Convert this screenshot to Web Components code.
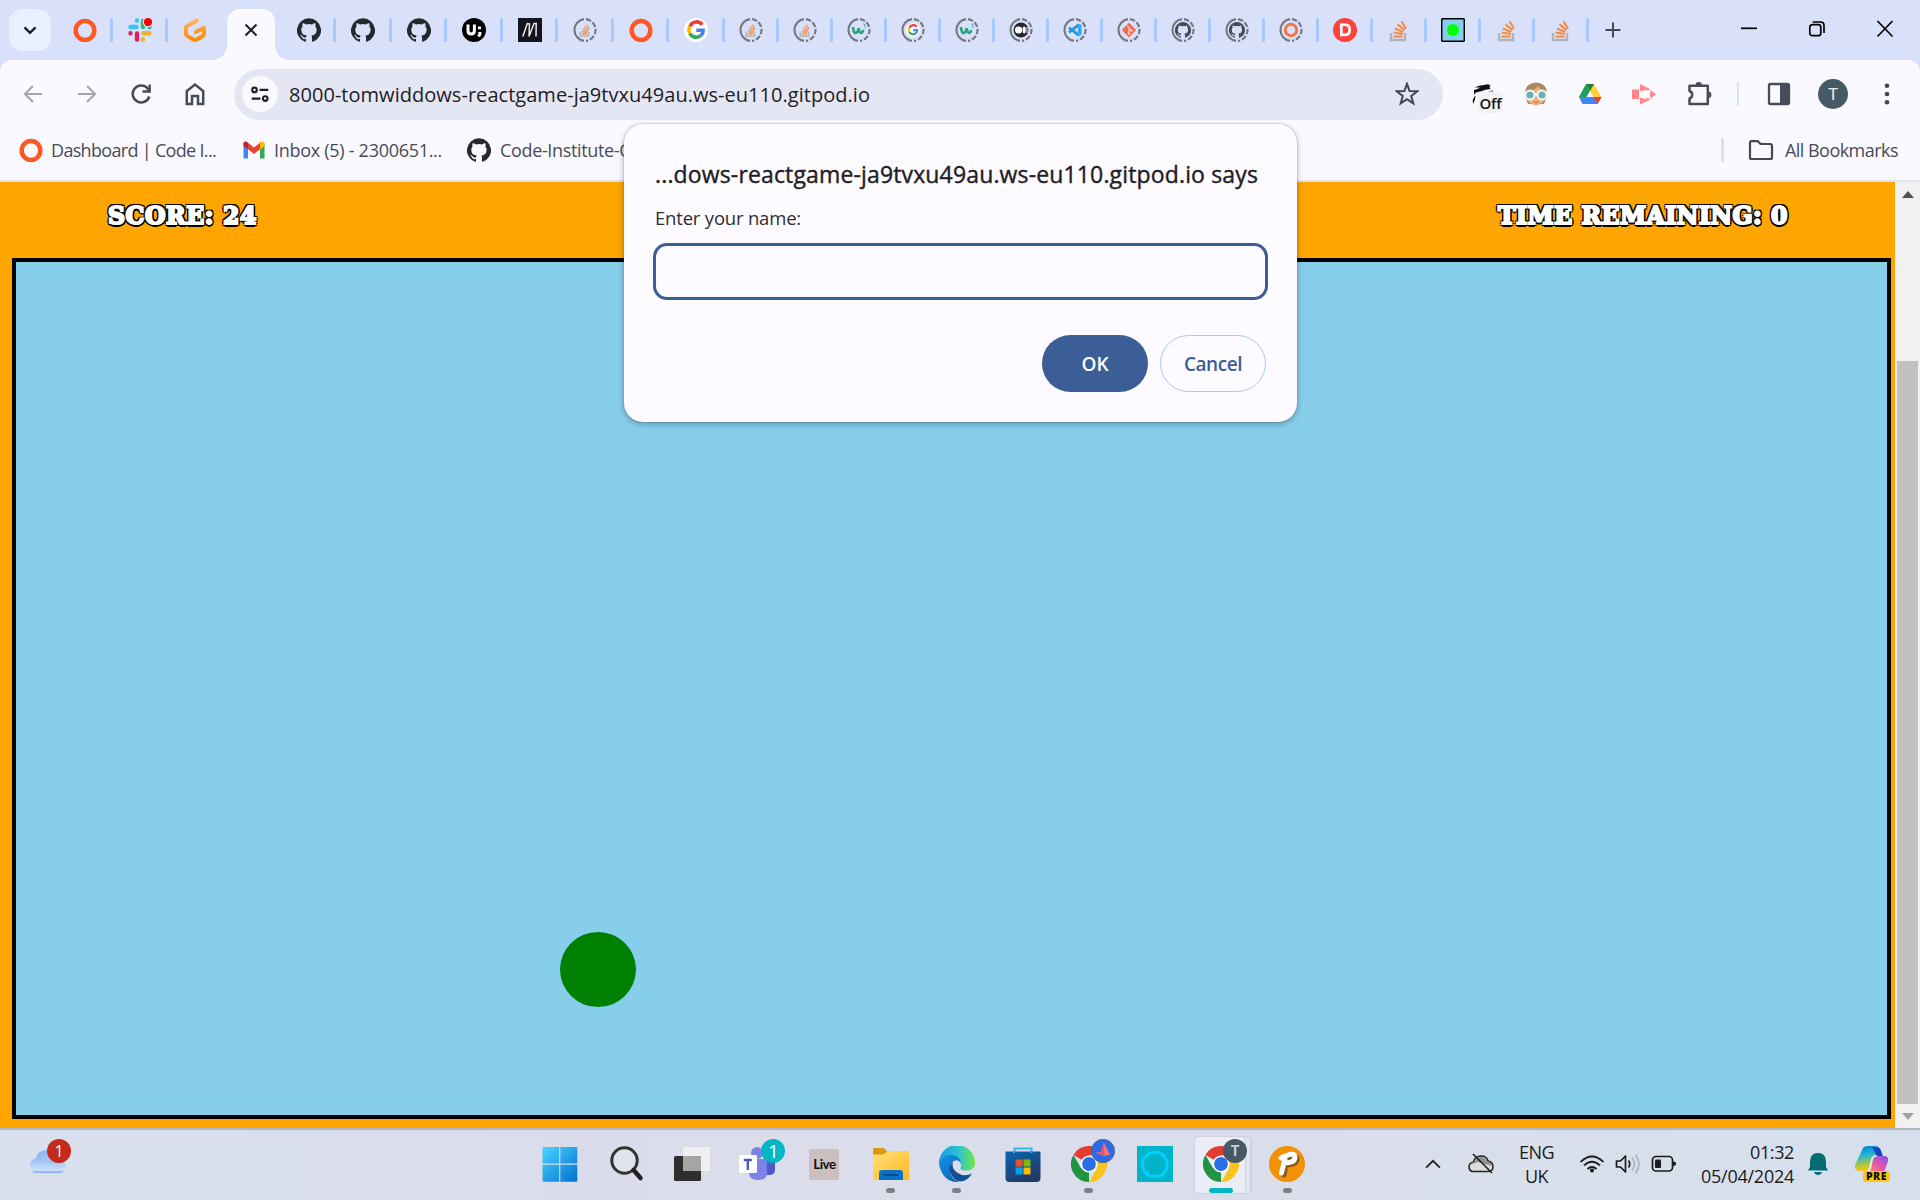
<!DOCTYPE html>
<html lang="en">
<head>
<meta charset="utf-8">
<title>React game</title>
<style>
html,body{margin:0;width:1920px;height:1200px;overflow:hidden;font-family:"Open Sans","Noto Sans",sans-serif}
</style>
</head>
<body>
<desk-top></desk-top>
<script>
const ring = inner => `<g fill="none" stroke="#737780" stroke-width="2.1"><path d="M11 1.100A11 11 0 0 0 11 22.900"/><path d="M13 1.100A11 11 0 0 1 13 22.900" stroke-dasharray="5.400 1.900"/></g><g transform="translate(4.8 4.8) scale(.6)">${inner}</g>`;
const octo = c => `<path fill="${c}" d="M12 .3a12 12 0 0 0-3.8 23.4c.6.1.8-.3.8-.6v-2c-3.300.7-4-1.600-4-1.600-.6-1.400-1.400-1.800-1.400-1.800-1-.7.1-.7.1-.7 1.200.1 1.900 1.200 1.900 1.200 1 1.800 2.800 1.300 3.500 1 0-.8.4-1.300.7-1.600-2.700-.3-5.500-1.300-5.500-6 0-1.200.5-2.300 1.300-3.100-.2-.4-.6-1.600 0-3.200 0 0 1-.3 3.400 1.200a11.500 11.500 0 0 1 6 0c2.300-1.500 3.300-1.200 3.300-1.200.6 1.600.2 2.800 0 3.200.9.8 1.300 1.900 1.300 3.200 0 4.600-2.800 5.600-5.500 5.900.5.4.9 1 .9 2.200v3.300c0 .3.1.7.8.6A12 12 0 0 0 12 .3"/>`;
const orangeO = `<ellipse cx="12" cy="12.500" rx="9.300" ry="9.600" fill="none" stroke="#ff5722" stroke-width="4.500"/>`;
const stack = `<path d="M4 15v7h14v-7" fill="none" stroke="#b0b4bd" stroke-width="2.400"/><path d="M6.500 18.500h9M6.600 14.600l9 1.500M8 10.500l8.300 3.700M10.500 6.400l7 5.700M14.500 3.200l4.500 7.500" stroke="#f48a3c" stroke-width="2"/>`;
const google = `<g fill="none" stroke-width="3.600"><path d="M18.300 6.800A7 7 0 0 0 6 8.500" stroke="#ea4335"/><path d="M5.900 8.500a7 7 0 0 0 0 7" stroke="#fbbc05"/><path d="M5.900 15.500a7 7 0 0 0 10.800 2" stroke="#34a853"/><path d="M16.700 17.500c1.600-1.300 2.500-3 2.400-5.200H12.300" stroke="#4285f4"/></g>`;
const chrome = `<path d="M18 18 2.400 9A18 18 0 0 1 33.600 9Z" fill="#e33b2e"/><path d="M18 18V36A18 18 0 0 1 2.400 9L10.200 22.500Z" fill="#229342"/><path d="M33.600 9A18 18 0 0 1 18 36L25.800 22.500 18 9Z" fill="#fcc31e"/><circle cx="18" cy="18" r="8.600" fill="#fff"/><circle cx="18" cy="18" r="6.900" fill="#2b6fe8"/>`;
const line = (d, c = '#474b57', w = 2.2) => `<path d="${d}" fill="none" stroke="${c}" stroke-width="${w}"/>`;
const ICONS = {
  o: [24,24,orangeO],
  slack: [24,24,`<g stroke-width="4.400" stroke-linecap="round"><path d="M2.500 9h6M9 2.500v.1" stroke="#36c5f0"/><path d="M15 3v6" stroke="#2eb67d"/><path d="M21.500 9v.1" stroke="#2eb67d"/><path d="M15.500 15.300h6M15 21.500v.1" stroke="#ecb22e"/><path d="M9 15.500v6M2.500 15.300v.1" stroke="#e01e5a"/></g><circle cx="20" cy="4" r="4.700" fill="#f00" stroke="#d9e1fa" stroke-width="1.200"/>`],
  gitpod: [24,24,`<defs><linearGradient id="g" x2="0" y2="1"><stop stop-color="#ffb45b"/><stop offset="1" stop-color="#ff8a00"/></linearGradient></defs><path d="M13.800 2.400 4.500 7.700Q3 8.500 3 10v5.800Q3 17.300 4.300 18l6.200 3.500q1.500.8 3 0l6.200-3.500q1.300-.7 1.300-2.200V9.500L12.800 14" fill="none" stroke="url(#g)" stroke-width="4" stroke-linecap="round" stroke-linejoin="round"/>`],
  x: [24,24,line('M6.500 6.500 17.500 17.500M17.500 6.500 6.500 17.500','#1f2024',2)],
  gh: [24,24,octo('#24292f')],
  ui: [24,24,`<circle cx="12" cy="12" r="12" fill="#000"/><path d="M6 6.500v6q0 3.500 3.200 3.500t3.200-3.500v-6" fill="none" stroke="#fff" stroke-width="3"/><path d="M17.500 8.500v2.800M17.800 14v2.500l-1.300 2" stroke="#fff" stroke-width="3" fill="none"/>`],
  mm: [24,24,`<path fill="#14141e" d="M0 0h24v24H0z"/><path d="M4.800 18.500 9.300 5.500l2.200.3-.5 12.700 5-13h2.200l-.2 13" stroke="#e8e8e8" stroke-width="1.500" fill="none"/>`],
  rso: [24,24,ring(stack)],
  g: [24,24,`<circle cx="12" cy="12" r="12" fill="#fff"/>${google}`],
  rg: [24,24,ring(`<circle cx="12" cy="12" r="11.500" fill="#fff"/>${google}`)],
  rw: [24,24,ring(`<path d="M2 7q1 11 5 10 3-1 4.500-8 1 8 4 8 2.500 0 3.500-5" fill="none" stroke="#24a87c" stroke-width="4.500"/><path d="M19 2q4-1 2 3 4 1 0 4" fill="none" stroke="#24a87c" stroke-width="1.500"/>`)],
  rmed: [24,24,ring(`<circle cx="12" cy="12" r="12.500" fill="#25262c"/><circle cx="8" cy="12" r="6" fill="#fff"/><ellipse cx="17.300" cy="12" rx="2.700" ry="5.800" fill="#fff"/><path d="M22 7v10" stroke="#fff" stroke-width="1.500"/>`)],
  rvs: [24,24,ring(`<path d="M18 3.500 2 16M18 20.500 2 8" stroke="#2396dc" stroke-width="4.500"/><path d="m17 1 6 2.500v17L17 23z" fill="#36a9ee"/>`)],
  rgit: [24,24,ring(`<path d="M12 0 24 12 12 24 0 12z" fill="#f66850"/><path d="M9 5l3 3v10M12 9l4 4" stroke="#ffe2dc" stroke-width="1.800" fill="none"/><circle cx="12" cy="18" r="2" fill="#ffe2dc"/><circle cx="16" cy="13" r="2" fill="#ffe2dc"/>`)],
  rgh: [24,24,ring(`<g transform="translate(-1.500 -1.500) scale(1.120)">${octo('#454a56')}</g>`)],
  ro: [24,24,ring(`<circle cx="12" cy="12" r="9.500" fill="none" stroke="#f37348" stroke-width="5"/>`)],
  d: [24,24,`<circle cx="12" cy="12" r="12" fill="#ff403d"/><path d="M8.300 6.700h3.200c3.600 0 5.200 2 5.200 5s-1.700 5.200-5.300 5.200H8.300z" fill="none" stroke="#fff" stroke-width="2.700"/>`],
  so: [24,24,stack],
  game: [24,24,`<rect x=".7" y=".7" width="22.600" height="22.600" rx="1" fill="#87ceeb" stroke="#000" stroke-width="1.500"/><circle cx="12" cy="12" r="6" fill="#0f0"/>`],
  plus: [24,24,line('M12 4.500v15M4.500 12h15','#454957',2)],
  chev: [24,24,line('M6.500 9.300 12 14.800 17.500 9.300','#1f2024',2.500)],
  min: [24,24,line('M4 11.300h16','#000',1.700)],
  rest: [24,24,`<rect x="4.800" y="7.700" width="11" height="11" rx="2.500" fill="none" stroke="#000" stroke-width="1.700"/><path d="M7.800 5h7.700q3.500 0 3.500 3.500v7.500" fill="none" stroke="#000" stroke-width="1.700"/>`],
  close: [24,24,line('M4.500 4 19.500 19.500M19.500 4 4.500 19.500','#000',1.700)],
  back: [24,24,line('M21 12H4M12 4 4 12l8 8','#a5a7ae')],
  fwd: [24,24,line('M3 12h17M12 4l8 8-8 8','#a5a7ae')],
  reload: [24,24,line('M20.300 14.500A8.500 8.500 0 1 1 18.500 6.200L20.500 9','#474b57',2.500)+line('M20.700 2.500V9.500H13.500','#474b57',2.400)],
  home: [24,24,line('M3.800 22V9L12 2.500 20.200 9V22H15V14H9V22Z','#474b57',2.500)],
  tune: [24,24,`<g fill="none" stroke="#1f2024" stroke-width="2.300"><circle cx="6" cy="7.500" r="2.500"/><path d="M11.500 7.500H21M3 17h9.500"/><circle cx="17.700" cy="17" r="2.500"/></g>`],
  star: [24,24,`<path d="M12 1.800 14.600 9l7.600.3-6 4.700 2.100 7.300L12 17.100 5.700 21.300 7.800 14l-6-4.700 7.600-.3Z" fill="none" stroke="#44464f" stroke-width="2"/>`],
  face: [24,24,`<path d="M1 14V10Q2 1 12 .5 22 1 23 10v4l-3 8H4z" fill="#a98a5f"/><path d="M4 9q8-1 10-5 2 4 7 5v7q-2 7-9 7.500Q5 23 3 16Z" fill="#eeae83"/><g fill="#70aeb5" stroke="#f5f8fa" stroke-width="2"><circle cx="6" cy="13" r="4.500"/><circle cx="18" cy="13" r="4.500"/></g><path d="M10.500 12.500h3" stroke="#fff" stroke-width="2"/><path d="M9.500 20q2.500.8 5 0" stroke="#bd684f" fill="none"/>`],
  drive: [24,24,`<path d="M8 2h8L4.800 22 1 15Z" fill="#18a05d"/><path d="M8 2h8l7.500 13H15Z" fill="#ffcf3f"/><path d="M8 2l4 7 4-7Z" fill="#188038"/><path d="M1 15h22.500l-4 7H4.800Z" fill="#4285f4"/><path d="M15.500 15h8l-4 7Z" fill="#ea4335"/><path d="m12 9 3.500 6h-7Z" fill="#faf9ff"/>`],
  pink: [24,24,`<path d="M0 7.500h7v9.500H0zM8 2l10.500 5.200-2.500 1-2 .3-1.500-1L11 9H8zM8 22.500l10.500-5-2.500-1.300-2 0-1.500 1.300L11 16H8zM18.500 8l5.500 4.300-5.500 4.700v-3q-2-1.700 0-3.500z" fill="#ff8688"/>`],
  puzzle: [26,26,`<path d="M3.500 4.800h18.300v18.200H3.500v-5.500q2.700-.8 2.700-3.700T3.500 10Z" fill="none" stroke="#474b5a" stroke-width="2.500" stroke-linejoin="round"/><path d="M9.500 4.500a3.200 3.400 0 0 1 6.400 0zM22 10.500a3.400 3.300 0 0 1 0 6.600z" fill="#474b5a"/>`],
  panel: [24,24,`<rect x="2" y="2" width="20" height="20" rx="1.500" fill="none" stroke="#474b5a" stroke-width="2.300"/><path d="M13 2h9v20h-9z" fill="#474b5a"/>`],
  dots: [24,24,`<g fill="#44464f"><circle cx="12" cy="3.800" r="2.300"/><circle cx="12" cy="12" r="2.300"/><circle cx="12" cy="20.200" r="2.300"/></g>`],
  horse: [30,30,`<path d="M4 13q-1-2 2-2.500 3-1 4-2H4.500q5-2.500 9-2.500l4.500-.7 2.500 1.200-1 1.700 1 1.800-5 .8-5 1.700q-3 .3-4.500 1-1 .5-2 2.500zM18 12.300l5-.8v1zM3 25l-.3-4 1.500-3 1.500-1-1 4.500z" fill="#111"/>`],
  gmail: [24,24,`<path d="M1.500 5v15.500H6V9z" fill="#4285f4"/><path d="M18 9v11.500h4.500V5z" fill="#34a853"/><path d="M1.500 5.500Q2 2.500 5 4l7 5.500L19 4v6.500l-7 5.500-7-5.500z" fill="#ea4335"/><path d="M1.500 5Q3 2 6 5v6L1.500 8z" fill="#c5221f"/><path d="M18 5q3-3 4.500 0v3L18 11.500z" fill="#fbbc04"/>`],
  folder: [26,24,`<path d="M2 19.500V5q0-1.800 1.800-1.800h6L12.500 6H22q2 0 2 2v11.500q0 1.500-1.500 1.500h-19Q2 21 2 19.500Z" fill="none" stroke="#474850" stroke-width="2.200"/>`],
  start: [36,36,`<defs><linearGradient id="g" x2="1" y2="1"><stop stop-color="#4cd3ff"/><stop offset="1" stop-color="#0071ce"/></linearGradient></defs><path d="M.5 2q0-1 1-1h15.700v16.500H.5zM18.300 1h16q1 0 1 1v15.500h-17zM.5 18.800h16.700v17H1.500q-1 0-1-1zM18.300 18.800h17v16q0 1-1 1h-16z" fill="url(#g)"/>`],
  search: [36,36,`<circle cx="15.500" cy="14.500" r="12.700" fill="#e1e3ea" stroke="#333" stroke-width="3"/><path d="m24.500 24 7 8" stroke="#222" stroke-width="4.500" stroke-linecap="round"/>`],
  task: [36,36,`<rect x="0" y="10" width="27" height="25" rx="1.500" fill="#2e2e2d"/><rect x="9" y="1" width="27" height="24" rx="1" fill="#f0f0f0"/><path d="M9 10h18v15H9z" fill="#a5a5a4"/>`],
  teams: [38,36,`<path d="M27 15h9v9q0 5-6 5h-6z" fill="#5059c9"/><circle cx="18" cy="7" r="6" fill="#7b83eb"/><path d="M10 13h18v14q0 7-9 7t-9-7z" fill="#7b83eb"/><rect x="0" y="9" width="18" height="18" rx="1.500" fill="#fff"/><path d="M4.800 14h8M8.800 14v10" stroke="#4b53bc" stroke-width="2.300"/>`],
  explorer: [36,36,`<defs><linearGradient id="g" x2="1" y2="1"><stop stop-color="#ffe07a"/><stop offset="1" stop-color="#ffb91d"/></linearGradient></defs><path d="M0 3.500q0-1.500 1.500-1.500H11l3 3.500v5H0z" fill="#dc9a0b"/><path d="M0 8.500h10L15 5h19.500Q36 5 36 6.500V34H0z" fill="url(#g)"/><path d="M6 34v-7q0-3 3-3h18q3 0 3 3v7z" fill="#0c70c7"/><path d="M11 29h13" stroke="#0a4d8d" stroke-width="1.800" stroke-linecap="round"/>`],
  edge: [36,36,`<defs><linearGradient id="g"><stop stop-color="#1a9be8"/><stop offset=".55" stop-color="#2cc3cf"/><stop offset="1" stop-color="#72e842"/></linearGradient><linearGradient id="h" x2=".7" y2="1"><stop stop-color="#1593e8"/><stop offset="1" stop-color="#0966bd"/></linearGradient></defs><path d="M0 18A18 18 0 0 1 36 16q0 8-7 8.500-8 .5-7.500-2.500 1.500-3-.5-6-3-4-9-4Q4 12 0 18Z" fill="url(#g)"/><path d="M0 18Q3 9 12 9q8 0 10 8-3-4-7-2-5 3-4 10 1 8 9 11Q4 37 0 18Z" fill="url(#h)"/><path d="M14 16q-6 5-2 12.500 4 7 10 7 7-1 11-8-8 4-15-1-6-4-4-10.500Z" fill="#124f97"/>`],
  store: [36,36,`<defs><linearGradient id="g" x2=".5" y2="1"><stop stop-color="#0966b5"/><stop offset="1" stop-color="#223a68"/></linearGradient></defs><path d="M9.500 8V2.500h17V8" fill="none" stroke="#35baf0" stroke-width="2.200"/><path d="M.5 5.500h35V32q0 4-4 4h-27q-4 0-4-4z" fill="url(#g)"/><path d="M9 7V5.500M26.500 7V5.500" stroke="#35baf0" stroke-width="2"/><path d="M10.500 13.500h7v7h-7z" fill="#f25022"/><path d="M18.500 13.500h7v7h-7z" fill="#7fba00"/><path d="M10.500 21.500h7v7h-7z" fill="#00a4ef"/><path d="M18.500 21.500h7v7h-7z" fill="#ffb900"/>`],
  chrome: [36,36,chrome],
  bird: [24,24,`<circle cx="12" cy="12" r="11.700" fill="#2d6ae8" stroke="#536379" stroke-width=".7"/><path d="m12.500 3 6.500 12.500-5.500 1.500-9-3 6-1.500z" fill="#fa7272"/><path d="m12.500 3 1 14-9-3 6.500-1z" fill="#d65675"/>`],
  alexa: [36,36,`<path d="M0 0h36v36H0z" fill="#00b5c9"/><path d="M15 30.500A12.300 12.300 0 1 1 21 30.500L18 30z" fill="none" stroke="#00d1ff" stroke-width="2.800"/>`],
  pp: [36,36,`<circle cx="18" cy="18" r="18" fill="#f39106"/><path d="M14 28 17 11q10-4 10 1 0 5-9 6" fill="none" stroke="#875a17" stroke-width="5" stroke-linecap="round" transform="translate(1 1)"/><path d="M12.500 27 16 13M12 12q14-7 14-1 0 6-11 6" fill="none" stroke="#fff" stroke-width="5" stroke-linecap="round"/>`],
  cloud: [38,26,`<defs><linearGradient id="g" x2=".5" y2="1"><stop stop-color="#86aef0"/><stop offset="1" stop-color="#c8e2fa"/></linearGradient><linearGradient id="h" x2="0" y2="1"><stop stop-color="#96b9f3"/><stop offset=".8" stop-color="#cbe2f9"/><stop offset="1" stop-color="#7b9fea"/></linearGradient></defs><path d="M6 14Q7 2 18 2q9 0 11 9 7 0 7 7 0 7-8 7H9Z" fill="url(#g)"/><path d="M1 18q0-7 7-7.500 6 0 9 4 5-5 11-2 8 0 8.500 4.500 1 8-6.500 8H7q-6 0-6-7Z" fill="url(#h)"/>`],
  up: [24,24,line('M4.500 16 12 8.500 19.500 16','#222',2)],
  nocloud: [26,24,`<path d="M4 19.500q-3-1-3-4.500 0-4 4.500-5Q7 4 13 4t7 5q5 1 5 5.500 0 5-5 5Z" fill="#ddd" stroke="#222" stroke-width="1.500"/><path d="m2 13 8-3 14 4-2-4-3-1q-2-4-6-4-5 0-6 5-4 0-5 3" fill="#919191"/><path d="m5 2 19 19" stroke="#222" stroke-width="1.700"/>`],
  wifi: [26,24,`<g fill="none" stroke="#1b1b1b" stroke-width="1.700"><path d="M1.500 10Q13-1 24.500 10M5 13.500q8-7.500 16 0M8.500 17q4.500-4 9 0"/></g><circle cx="13" cy="18.500" r="2" fill="#111"/>`],
  vol: [26,24,`<path d="M1.500 9h4l5-5v16l-5-5h-4z" fill="none" stroke="#1b1b1b" stroke-width="1.700" stroke-linejoin="round"/><path d="M13.500 8.500q2.500 3.500 0 7" fill="none" stroke="#1b1b1b" stroke-width="1.700"/><path d="M17 5.500q5 6.500 0 13M20.500 3q7 9 0 18" fill="none" stroke="#a9afb9" stroke-width="1.500"/>`],
  bat: [26,24,`<rect x="1.500" y="4.500" width="20" height="14.500" rx="3.500" fill="none" stroke="#1b1b1b" stroke-width="1.700"/><rect x="4" y="7.500" width="6" height="8.500" rx="1" fill="#1b1b1b"/><path d="M22 9.500q3 0 3 2.200T22 14z" fill="#1b1b1b"/>`],
  bell: [24,24,`<path d="M12 1q8 0 8 9v5l2 3.500H2L4 15v-5q0-9 8-9ZM8 20h8q-1 3-4 3t-4-3Z" fill="#036c73"/>`],
  copilot: [36,36,`<defs><linearGradient id="g" x2=".2" y2="1"><stop stop-color="#0078d4"/><stop offset=".4" stop-color="#1eb5d8"/><stop offset=".8" stop-color="#b7c83a"/><stop offset="1" stop-color="#f5c31c"/></linearGradient><linearGradient id="h" x1=".8" x2="0" y2="1"><stop stop-color="#8e4fe8"/><stop offset=".5" stop-color="#ee58a6"/><stop offset="1" stop-color="#fa9a4c"/></linearGradient></defs><path d="M9 2q1-2 5-2h7q4 0 6 5l2 5h-6q-3 0-4 4l-3 8q-1 3-4 3H6q-6 0-5-6Z" fill="url(#g)"/><path d="M18 1h4q4 0 5 4l2 6h-6q-3-7-5-10Z" fill="#1746c4"/><path d="M22 10h8q5 0 4 5l-3 9q-1 3-4 3H13q3-1 4-4l2-9q1-4 3-4Z" fill="url(#h)"/><path d="M23 10h-2q-3 1-3.500 5l-2 8q-.5 3-3.500 4" fill="none" stroke="#fff" stroke-opacity=".8" stroke-width="1.500"/>`],
  au: [12,8,`<path d="M0 7 6 0l6 7z" fill="#505050"/>`],
  ad: [12,8,`<path d="M0 0l6 7 6-7z" fill="#a3a3a3"/>`]
};

class Base extends HTMLElement {
  connectedCallback() {
    if (this.shadowRoot) return;
    const t = document.createElement('template');
    t.innerHTML = this.render();
    this.attachShadow({mode: 'open'}).appendChild(t.content.cloneNode(true));
    this.ready?.();
  }
}
customElements.define('ui-icon', class extends Base {
  render() {
    const [w, h, body] = ICONS[this.getAttribute('name')];
    const k = (+this.getAttribute('size') || w) / w;
    return `<style>:host{display:block;flex:none;line-height:0}</style><svg width="${w * k}" height="${h * k}" viewBox="0 0 ${w} ${h}">${body}</svg>`;
  }
});
/* A single line of text whose tracking is set so that it fills a given width. */
customElements.define('fit-text', class extends Base {
  render() { return `<style>:host{display:block;white-space:pre;flex:none;width:${this.getAttribute('w')}px}span{display:inline-block}</style><span><slot></slot></span>`; }
  ready() {
    const s = this.shadowRoot.querySelector('span');
    s.style.letterSpacing = '0px';
    const d = (+this.getAttribute('w') - s.getBoundingClientRect().width) / this.textContent.length;
    s.style.letterSpacing = d + 'px';
  }
});
customElements.define('tab-cell', class extends Base {
  render() { return `<style>:host{display:flex;align-items:center;flex:none;width:${this.getAttribute('w')}px;height:60px}
    div{flex:1;display:flex;justify-content:center;padding-left:${this.getAttribute('shift') || 0}px}i{width:3px;height:24px;border-radius:1px;background:${this.hasAttribute('nosep') ? 'transparent' : '#a8c7fa'}}</style>
    <div><ui-icon name="${this.getAttribute('icon')}"></ui-icon></div><i></i>`; }
});
customElements.define('tab-active', class extends Base {
  render() { return `<style>:host{display:flex;align-items:flex-end;flex:none;width:76px;height:60px}
    .t{width:48px;height:51px;border-radius:13px 13px 0 0;background:#faf9ff;display:flex;align-items:center;justify-content:center}
    .t ui-icon{margin-top:-9px}
    i{width:14px;height:14px}.l{background:radial-gradient(circle at 0 0,transparent 13.500px,#faf9ff 14px)}.r{background:radial-gradient(circle at 100% 0,transparent 13.500px,#faf9ff 14px)}</style>
    <i class="l"></i><div class="t"><ui-icon name="x"></ui-icon></div><i class="r"></i>`; }
});
customElements.define('tab-strip', class extends Base {
  render() {
    const tabs = [['gh',47,-5],['gh',55.5,2],['gh',55.5,2],['ui',56,1],['mm',55,2],['rso',56,0],['o',55,2],['g',56,0],...['rso','rso','rw','rg','rw','rmed','rvs','rgit','rgh','rgh','ro','d','so','game','so','so'].map(n => [n,54,0])];
    return `<style>:host{display:flex;height:60px;background:#d9e1fa}
      .s{flex:none;width:42px;height:42px;margin:9px 5px 0 9px;border-radius:14px;background:#ebf0fe;display:flex;align-items:center;justify-content:center}
      .w{margin-left:auto;display:flex;gap:44px;align-items:center;height:58px;padding-right:23px}.p{display:flex;align-items:center;margin-left:12px}tab-active{margin-left:-2px}</style>
      <div class="s"><ui-icon name="chev"></ui-icon></div>
      <tab-cell icon="o" w="57" shift="3"></tab-cell><tab-cell icon="slack" w="55" shift="2"></tab-cell><tab-cell icon="gitpod" w="47" nosep shift="10"></tab-cell>
      <tab-active></tab-active>${tabs.map(([n, w, s]) => `<tab-cell icon="${n}" w="${w}"${s < 0 ? ` style="margin-left:${s}px;width:${w - s}px"` : ` shift="${s}"`}></tab-cell>`).join('')}
      <div class="p"><ui-icon name="plus"></ui-icon></div>
      <div class="w"><ui-icon name="min"></ui-icon><ui-icon name="rest"></ui-icon><ui-icon name="close"></ui-icon></div>`;
  }
});
customElements.define('address-bar', class extends Base {
  render() { return `<style>:host{display:flex;align-items:center;flex:none;width:1209px;height:51px;border-radius:26px;background:#e4e7f3;box-sizing:border-box;padding:0 24px 0 8px;font-size:20px;color:#1f2024}
    .c{width:36px;height:36px;border-radius:50%;background:#faf9ff;display:flex;align-items:center;justify-content:center;margin-right:11px}ui-icon[name=star]{margin-left:auto}</style>
    <div class="c"><ui-icon name="tune" size="22"></ui-icon></div><fit-text w="581">8000-tomwiddows-reactgame-ja9tvxu49au.ws-eu110.gitpod.io</fit-text><ui-icon name="star"></ui-icon>`; }
});
customElements.define('tool-bar', class extends Base {
  render() { return `<style>:host{display:block;background:#d9e1fa}.bar{display:flex;height:68px;align-items:center;border-radius:12px 12px 0 0;background:#faf9ff}
    .n{display:flex;gap:30px;padding-left:21px;width:213px}
    .e{display:flex;gap:30px;align-items:center;padding-left:27px}
    .off{position:relative}.off b{position:absolute;left:8px;top:13px;width:25px;height:21px;border-radius:5px;background:#f2f2f6;font:600 15px/22px "Open Sans",sans-serif;letter-spacing:-.3px;text-align:center;color:#111}
    .sep{width:2px;height:24px;background:#d3e2fd;margin-left:-5px}
    .av{width:30px;height:30px;border-radius:50%;background:#455a64;color:#eee;font:17px/30px Roboto,sans-serif;text-align:center;margin:0 -3px}</style>
    <div class="bar"><div class="n"><ui-icon name="back"></ui-icon><ui-icon name="fwd"></ui-icon><ui-icon name="reload"></ui-icon><ui-icon name="home"></ui-icon></div>
    <address-bar></address-bar>
    <div class="e"><div class="off"><ui-icon name="horse"></ui-icon><b>Off</b></div><ui-icon name="face" style="margin-left:-6px"></ui-icon><ui-icon name="drive"></ui-icon><ui-icon name="pink"></ui-icon><ui-icon name="puzzle"></ui-icon><div class="sep"></div><ui-icon name="panel" style="margin-left:-2px"></ui-icon><div class="av">T</div><ui-icon name="dots"></ui-icon></div></div>`; }
});
customElements.define('bookmark-item', class extends Base {
  render() { return `<style>:host{display:flex;align-items:center;flex:none;gap:8px;font-size:18px;color:#474b57}</style><ui-icon name="${this.getAttribute('icon')}"></ui-icon><slot></slot>`; }
});
customElements.define('bookmark-bar', class extends Base {
  render() { return `<style>:host{display:flex;align-items:center;padding:0 22px 8px 19px;border-bottom:2px solid #e0e2ec;height:44px;background:#faf9ff}
    .sep{width:3px;height:24px;background:#d3e2fd;margin:0 24px 0 auto}</style>
    <bookmark-item icon="o"><fit-text w="165">Dashboard | Code I...</fit-text></bookmark-item>
    <bookmark-item icon="gmail" style="margin-left:26px"><fit-text w="168">Inbox (5) - 2300651...</fit-text></bookmark-item>
    <bookmark-item icon="gh" style="margin-left:25px;gap:9px"><fit-text w="140">Code-Institute-Or</fit-text></bookmark-item>
    <div class="sep"></div><bookmark-item icon="folder" style="gap:11px"><fit-text w="113">All Bookmarks</fit-text></bookmark-item>`; }
});
customElements.define('score-text', class extends Base {
  render() { return `<style>:host{display:block;flex:none;font:bold 23.500px/32px "DejaVu Serif",serif;color:#fff;text-transform:uppercase;-webkit-text-stroke:2.200px #fff;
    text-shadow:2.500px 0 #000,-2.500px 0 #000,0 2.500px #000,0 -2.500px #000,2px 2px #000,-2px 2px #000,2px -2px #000,-2px -2px #000}</style><fit-text w="${this.getAttribute('w')}"><slot></slot></fit-text>`; }
  ready() {
    const f = this.shadowRoot.querySelector('fit-text'), s = f.shadowRoot.querySelector('span');
    s.style.letterSpacing = '0px';
    s.style.letterSpacing = (+this.getAttribute('w') - s.getBoundingClientRect().width) / this.textContent.length + 'px';
  }
});
customElements.define('game-page', class extends Base {
  render() { return `<style>:host{display:flex;height:946px}.g{flex:1;background:#ffa500;display:flex;flex-direction:column;padding:0 4px 9px 12px}
    .h{display:flex;justify-content:space-between;height:58px;padding:18px 103px 0 96px}
    .b{flex:1;border:4px solid #000;background:#87ceeb;position:relative}
    .ball{position:absolute;left:544px;top:670px;width:76px;height:75px;border-radius:50%;background:#008000}
    .s{width:25px;background:#f1f1f1;display:flex;flex-direction:column;align-items:center;padding:9px 0;box-sizing:border-box}
    .t{flex:none;width:21px;height:743px;background:#c1c1c1;margin:162px 0 9px}</style>
    <div class="g"><div class="h"><score-text w="149">Score: 24</score-text><score-text w="290">Time Remaining: 0</score-text></div><div class="b"><div class="ball"></div></div></div>
    <div class="s"><ui-icon name="au"></ui-icon><div class="t"></div><ui-icon name="ad"></ui-icon></div>`; }
});
customElements.define('prompt-dialog', class extends Base {
  render() { return `<style>:host{position:absolute;left:624px;top:124px;width:673px;height:298px;box-sizing:border-box;padding:34px 29px 20px;background:#fdfbff;border-radius:19px;box-shadow:0 0 0 1px rgba(90,100,130,.15),0 2px 6px rgba(0,0,0,.3);display:flex;flex-direction:column;color:#1f2024}
    .a{font-size:23px;-webkit-text-stroke:.4px #1f2024;line-height:32px;padding-left:2px}.m{font-size:18.500px;line-height:26px;padding-left:2px;margin:15px 0 12px;color:#2c2d33}
    .i{height:57px;flex:none;box-sizing:border-box;border:3px solid #3b5e97;border-radius:14px}
    .r{display:flex;justify-content:flex-end;gap:12px;margin:35px 2px 0 0;font-size:19px;font-weight:600}
    .r div{width:106px;height:57px;border-radius:29px;box-sizing:border-box;display:flex;align-items:center;justify-content:center}.ok{background:#3b5e97;color:#fff}.ca{border:1.500px solid #a8c7fa;color:#3b5e97}</style>
    <div class="a"><fit-text w="603">...dows-reactgame-ja9tvxu49au.ws-eu110.gitpod.io says</fit-text></div>
    <div class="m"><fit-text w="146">Enter your name:</fit-text></div><div class="i"></div>
    <div class="r"><div class="ok"><fit-text w="27">OK</fit-text></div><div class="ca"><fit-text w="58">Cancel</fit-text></div></div>`; }
});
customElements.define('task-app', class extends Base {
  render() { const r = this.getAttribute('run'); return `<style>:host{display:flex;position:relative;flex:none;width:66.100px;height:70px;align-items:center;justify-content:center}
    .bg{position:absolute;left:6px;top:6px;width:50px;height:56px;border-radius:5px;background:#eaedf6;border:1px solid #cdd2e0;box-shadow:5px 0 0 -1px #e1e5f0,6px 0 0 0 #cdd2e0}
    .m{position:relative;display:flex;top:-1px}
    i{position:absolute;bottom:7px;left:50%;width:${r === 'on' ? 24 : 9}px;margin-left:${r === 'on' ? -12 : -4.5}px;height:5px;border-radius:3px;background:${r === 'on' ? '#00b5c5' : '#7d8087'}}
    ::slotted(.bd){position:absolute;right:-8px;top:-7px;width:24px;height:24px;border-radius:50%}</style>
    ${r === 'on' ? '<div class="bg"></div>' : ''}<div class="m">${this.getAttribute('icon') ? `<ui-icon name="${this.getAttribute('icon')}"></ui-icon>` : ''}<slot></slot></div>${r ? '<i></i>' : ''}`; }
});
customElements.define('task-bar', class extends Base {
  render() { return `<style>:host{display:flex;align-items:flex-start;height:72px;box-sizing:border-box;border-top:2px solid #b2b6c5;background:linear-gradient(90deg,#d9e0ed,#dadceb 30%,#dadeea 65%,#d6e0ed)}
    .wx{position:relative;padding:18px 0 0 29px;width:497px;box-sizing:border-box;margin-right:30px}
    .red{position:absolute;left:47px;top:9px;width:24px;height:24px;border-radius:50%;background:#c42b1c;color:#fff;font-size:16px;line-height:24px;text-align:center}
    .te{background:#00b7c3;color:#fff;font-size:19px;line-height:24px;text-align:center}.av{background:#455a64;color:#ccd4d8;font:bold 14px/24px Roboto,sans-serif;text-align:center}
    .live{width:30px;height:31px;border-radius:2px;background:#cbbfbf;font:700 13.500px/31px Lato,sans-serif;text-align:center;color:#111;letter-spacing:-.5px}
    .tray{margin-left:auto;display:flex;align-items:center;height:68px;font-size:18px;color:#1b1b1b;line-height:24px;padding-right:30px}
    .c{width:38px;margin:0 22px 0 25px}.d{display:flex;flex-direction:column;align-items:flex-end;margin:0 12px 0 24px}.co{position:relative}
    .co b{position:absolute;left:9px;top:25px;background:#ffc60b;border-radius:3px;width:27px;height:11px;font:800 10.500px/11px "Open Sans",sans-serif;text-align:center;letter-spacing:.5px;color:#111}</style>
    <div class="wx"><ui-icon name="cloud"></ui-icon><span class="red">1</span></div>
    <task-app icon="start"></task-app><task-app icon="search" style="left:1px"></task-app><task-app icon="task"></task-app>
    <task-app icon="teams"><span class="bd te">1</span></task-app><task-app><div class="live">Live</div></task-app><task-app icon="explorer" run="1"></task-app><task-app icon="edge" run="1"></task-app><task-app icon="store"></task-app>
    <task-app icon="chrome" run="1"><ui-icon class="bd" name="bird"></ui-icon></task-app><task-app icon="alexa"></task-app><task-app icon="chrome" run="on"><span class="bd av">T</span></task-app><task-app icon="pp" run="1"></task-app>
    <div class="tray"><ui-icon name="up" size="22"></ui-icon><ui-icon name="nocloud" style="margin-left:24px"></ui-icon>
    <div class="c"><fit-text w="35">ENG</fit-text><fit-text w="23" style="margin-left:6px">UK</fit-text></div>
    <ui-icon name="wifi"></ui-icon><ui-icon name="vol" style="margin-left:10px"></ui-icon><ui-icon name="bat" style="margin-left:10px"></ui-icon>
    <div class="d"><fit-text w="44">01:32</fit-text><fit-text w="93">05/04/2024</fit-text></div><ui-icon name="bell"></ui-icon>
    <div class="co" style="margin-left:24px"><ui-icon name="copilot"></ui-icon><b>PRE</b></div></div>`; }
});
customElements.define('desk-top', class extends Base {
  render() { return `<style>:host{display:flex;flex-direction:column;width:1920px;height:1200px;position:relative;overflow:hidden}</style>
    <tab-strip></tab-strip><tool-bar></tool-bar><bookmark-bar></bookmark-bar><game-page></game-page><task-bar></task-bar><prompt-dialog></prompt-dialog>`; }
});
</script>
</body>
</html>
